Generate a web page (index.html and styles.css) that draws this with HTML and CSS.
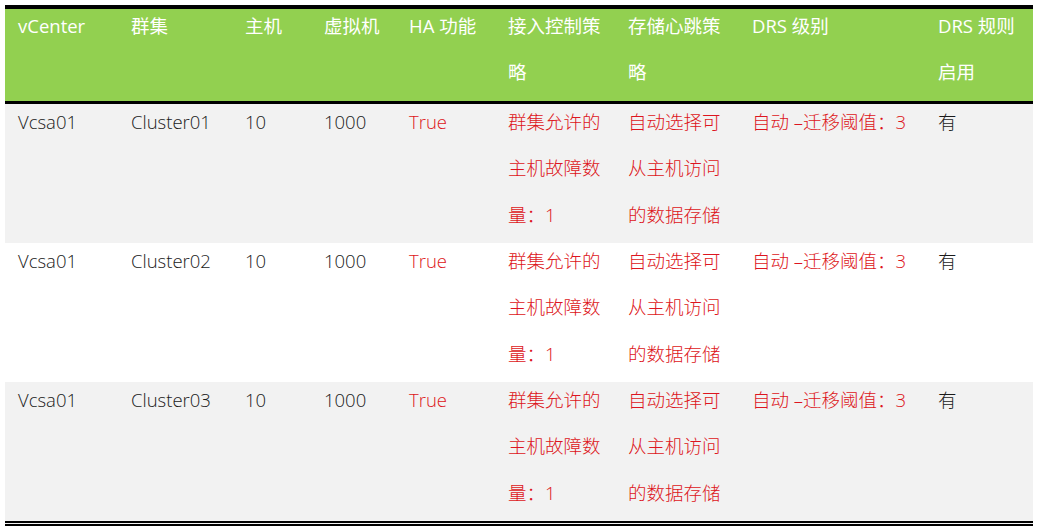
FILE: index.html
```html
<!DOCTYPE html>
<html lang="zh-CN">
<head>
<meta charset="utf-8">
<title>Cluster table</title>
<link rel="stylesheet" href="styles.css">
</head>
<body>
<table class="grid">
  <colgroup>
    <col class="c1"><col class="c2"><col class="c3"><col class="c4"><col class="c5">
    <col class="c6"><col class="c7"><col class="c8"><col class="c9">
  </colgroup>
  <thead>
    <tr>
      <th><div class="t">vCenter</div></th>
      <th><div class="t">群集</div></th>
      <th><div class="t">主机</div></th>
      <th><div class="t">虚拟机</div></th>
      <th><div class="t">HA 功能</div></th>
      <th><div class="t">接入控制策略</div></th>
      <th><div class="t">存储心跳策略</div></th>
      <th><div class="t">DRS 级别</div></th>
      <th><div class="t">DRS 规则启用</div></th>
    </tr>
  </thead>
  <tbody>
    <tr class="shade">
      <td><div class="t">Vcsa01</div></td>
      <td><div class="t">Cluster01</div></td>
      <td><div class="t">10</div></td>
      <td><div class="t">1000</div></td>
      <td class="red"><div class="t">True</div></td>
      <td class="red"><div class="t">群集允许的主机故障数量：1</div></td>
      <td class="red"><div class="t">自动选择可从主机访问的数据存储</div></td>
      <td class="red"><div class="t">自动 –迁移阈值：3</div></td>
      <td><div class="t">有</div></td>
    </tr>
    <tr>
      <td><div class="t">Vcsa01</div></td>
      <td><div class="t">Cluster02</div></td>
      <td><div class="t">10</div></td>
      <td><div class="t">1000</div></td>
      <td class="red"><div class="t">True</div></td>
      <td class="red"><div class="t">群集允许的主机故障数量：1</div></td>
      <td class="red"><div class="t">自动选择可从主机访问的数据存储</div></td>
      <td class="red"><div class="t">自动 –迁移阈值：3</div></td>
      <td><div class="t">有</div></td>
    </tr>
    <tr class="shade last">
      <td><div class="t">Vcsa01</div></td>
      <td><div class="t">Cluster03</div></td>
      <td><div class="t">10</div></td>
      <td><div class="t">1000</div></td>
      <td class="red"><div class="t">True</div></td>
      <td class="red"><div class="t">群集允许的主机故障数量：1</div></td>
      <td class="red"><div class="t">自动选择可从主机访问的数据存储</div></td>
      <td class="red"><div class="t">自动 –迁移阈值：3</div></td>
      <td><div class="t">有</div></td>
    </tr>
  </tbody>
</table>
</body>
</html>
```

FILE: styles.css
```css
html, body {
  margin: 0;
  padding: 0;
  background: #ffffff;
}

body {
  padding: 5px 6px 0 5px;
  font-family: "Open Sans", "Noto Sans CJK SC", sans-serif;
  font-size: 18.5px;
  color: #1a1a1a;
}

.grid {
  width: 1028px;
  table-layout: fixed;
  border-collapse: separate;
  border-spacing: 0;
}

.c1 { width: 113px; }
.c2 { width: 114px; }
.c3 { width: 79px; }
.c4 { width: 85px; }
.c5 { width: 99px; }
.c6 { width: 120px; }
.c7 { width: 124px; }
.c8 { width: 186px; }
.c9 { width: 108px; }

th, td {
  padding: 0 8px 0 13px;
  text-align: left;
  vertical-align: top;
  line-height: 46.4px;
  overflow: hidden;
}

th {
  height: 92px;
  background: #92d050;
  color: #ffffff;
  font-weight: 400;
  border-top: 4px solid #000000;
  border-bottom: 3px solid #000000;
}

th .t {
  margin-top: -6px;
}

td {
  height: 139px;
  font-weight: 300;
}

td .t {
  margin-top: -5px;
}

.shade td {
  background: #f2f2f2;
}

.red {
  color: #dd1520;
}

.last td {
  border-bottom: 5px double #000000;
}
```
